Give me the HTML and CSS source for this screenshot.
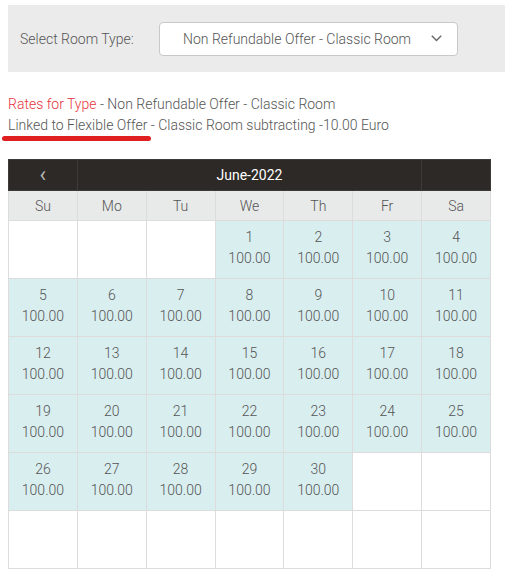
FILE: index.html
```html
<!DOCTYPE html>
<html>
<head>
<meta charset="utf-8">
<link rel="stylesheet" href="styles.css">
</head>
<body>
<div class="panel">
  <label class="label">Select Room Type:</label>
  <div class="select">
    <span class="select-text">Non Refundable Offer - Classic Room</span>
    <svg class="chev" width="11" height="7" viewBox="0 0 11 7"><path d="M0.8 0.8 L5.5 5.6 L10.2 0.8" fill="none" stroke="#666" stroke-width="1.4"/></svg>
  </div>
</div>
<div class="info">
  <div class="line"><span class="red">Rates for Type</span> - Non Refundable Offer - Classic Room</div>
  <div class="line">Linked to Flexible Offer - Classic Room subtracting -10.00 Euro</div>
  <div class="mark"></div>
</div>
<table class="cal">
  <thead>
    <tr class="head">
      <th class="nav">&#8249;</th>
      <th colspan="5" class="title">June-2022</th>
      <th class="nav"></th>
    </tr>
    <tr class="dow">
      <th>Su</th><th>Mo</th><th>Tu</th><th>We</th><th>Th</th><th>Fr</th><th>Sa</th>
    </tr>
  </thead>
  <tbody>
    <tr>
      <td class="empty"></td><td class="empty"></td><td class="empty"></td>
      <td class="day"><div>1</div><div>100.00</div></td>
      <td class="day"><div>2</div><div>100.00</div></td>
      <td class="day"><div>3</div><div>100.00</div></td>
      <td class="day"><div>4</div><div>100.00</div></td>
    </tr>
    <tr>
      <td class="day"><div>5</div><div>100.00</div></td>
      <td class="day"><div>6</div><div>100.00</div></td>
      <td class="day"><div>7</div><div>100.00</div></td>
      <td class="day"><div>8</div><div>100.00</div></td>
      <td class="day"><div>9</div><div>100.00</div></td>
      <td class="day"><div>10</div><div>100.00</div></td>
      <td class="day"><div>11</div><div>100.00</div></td>
    </tr>
    <tr>
      <td class="day"><div>12</div><div>100.00</div></td>
      <td class="day"><div>13</div><div>100.00</div></td>
      <td class="day"><div>14</div><div>100.00</div></td>
      <td class="day"><div>15</div><div>100.00</div></td>
      <td class="day"><div>16</div><div>100.00</div></td>
      <td class="day"><div>17</div><div>100.00</div></td>
      <td class="day"><div>18</div><div>100.00</div></td>
    </tr>
    <tr>
      <td class="day"><div>19</div><div>100.00</div></td>
      <td class="day"><div>20</div><div>100.00</div></td>
      <td class="day"><div>21</div><div>100.00</div></td>
      <td class="day"><div>22</div><div>100.00</div></td>
      <td class="day"><div>23</div><div>100.00</div></td>
      <td class="day"><div>24</div><div>100.00</div></td>
      <td class="day"><div>25</div><div>100.00</div></td>
    </tr>
    <tr>
      <td class="day"><div>26</div><div>100.00</div></td>
      <td class="day"><div>27</div><div>100.00</div></td>
      <td class="day"><div>28</div><div>100.00</div></td>
      <td class="day"><div>29</div><div>100.00</div></td>
      <td class="day"><div>30</div><div>100.00</div></td>
      <td class="empty"></td><td class="empty"></td>
    </tr>
    <tr>
      <td class="empty"></td><td class="empty"></td><td class="empty"></td><td class="empty"></td><td class="empty"></td><td class="empty"></td><td class="empty"></td>
    </tr>
  </tbody>
</table>
</body>
</html>
```
FILE: styles.css
```css
html, body {
  margin: 0;
  padding: 0;
  background: #fff;
}
body {
  font-family: Roboto, "Liberation Sans", sans-serif;
  font-weight: 300;
  font-size: 14px;
  color: #555;
  padding-top: 5px;
  overflow: hidden;
}
.panel {
  margin-left: 8px;
  height: 67px;
  background: #ebebeb;
  display: flex;
  align-items: center;
  padding-left: 12px;
  box-sizing: border-box;
}
.label {
  width: 139px;
  font-size: 14px;
  color: #555;
  padding-top: 1px;
}
.select {
  width: 299px;
  height: 34px;
  box-sizing: border-box;
  background: #fff;
  border: 1px solid #c8c8c8;
  border-radius: 4px;
  display: flex;
  align-items: center;
  padding-left: 23px;
  padding-right: 15px;
}
.select-text {
  flex: 1;
  font-size: 14px;
  color: #555;
}
.chev {
  display: block;
}
.info {
  position: relative;
  margin: 22px 0 0 8px;
  line-height: 21px;
}
.red {
  color: #e8343c;
}
.mark {
  position: absolute;
  left: -6px;
  top: 42px;
  width: 149px;
  height: 5px;
  border-radius: 3px;
  background: #e01f20;
}
.cal {
  margin: 23px 0 0 8px;
  width: 483px;
  border-collapse: collapse;
  table-layout: fixed;
}
.cal th, .cal td {
  border: 1px solid #dcdcdc;
  padding: 0;
  text-align: center;
  font-weight: 300;
}
.head th {
  background: #2d2926;
  border-color: #3e3a37;
  color: #fff;
  height: 30px;
  font-size: 14px;
  font-weight: 400;
}
.head .nav {
  color: #b8b8b8;
  font-size: 22px;
  line-height: 20px;
}
.dow th {
  background: #e8e9e9;
  height: 29px;
  color: #555;
}
.cal td {
  height: 57px;
  vertical-align: top;
}
.day {
  background: #d9eeef;
}
.day div:first-child {
  padding-top: 8px;
  line-height: 17px;
}
.day div:last-child {
  line-height: 24px;
}
.empty {
  background: #fff;
}
```
